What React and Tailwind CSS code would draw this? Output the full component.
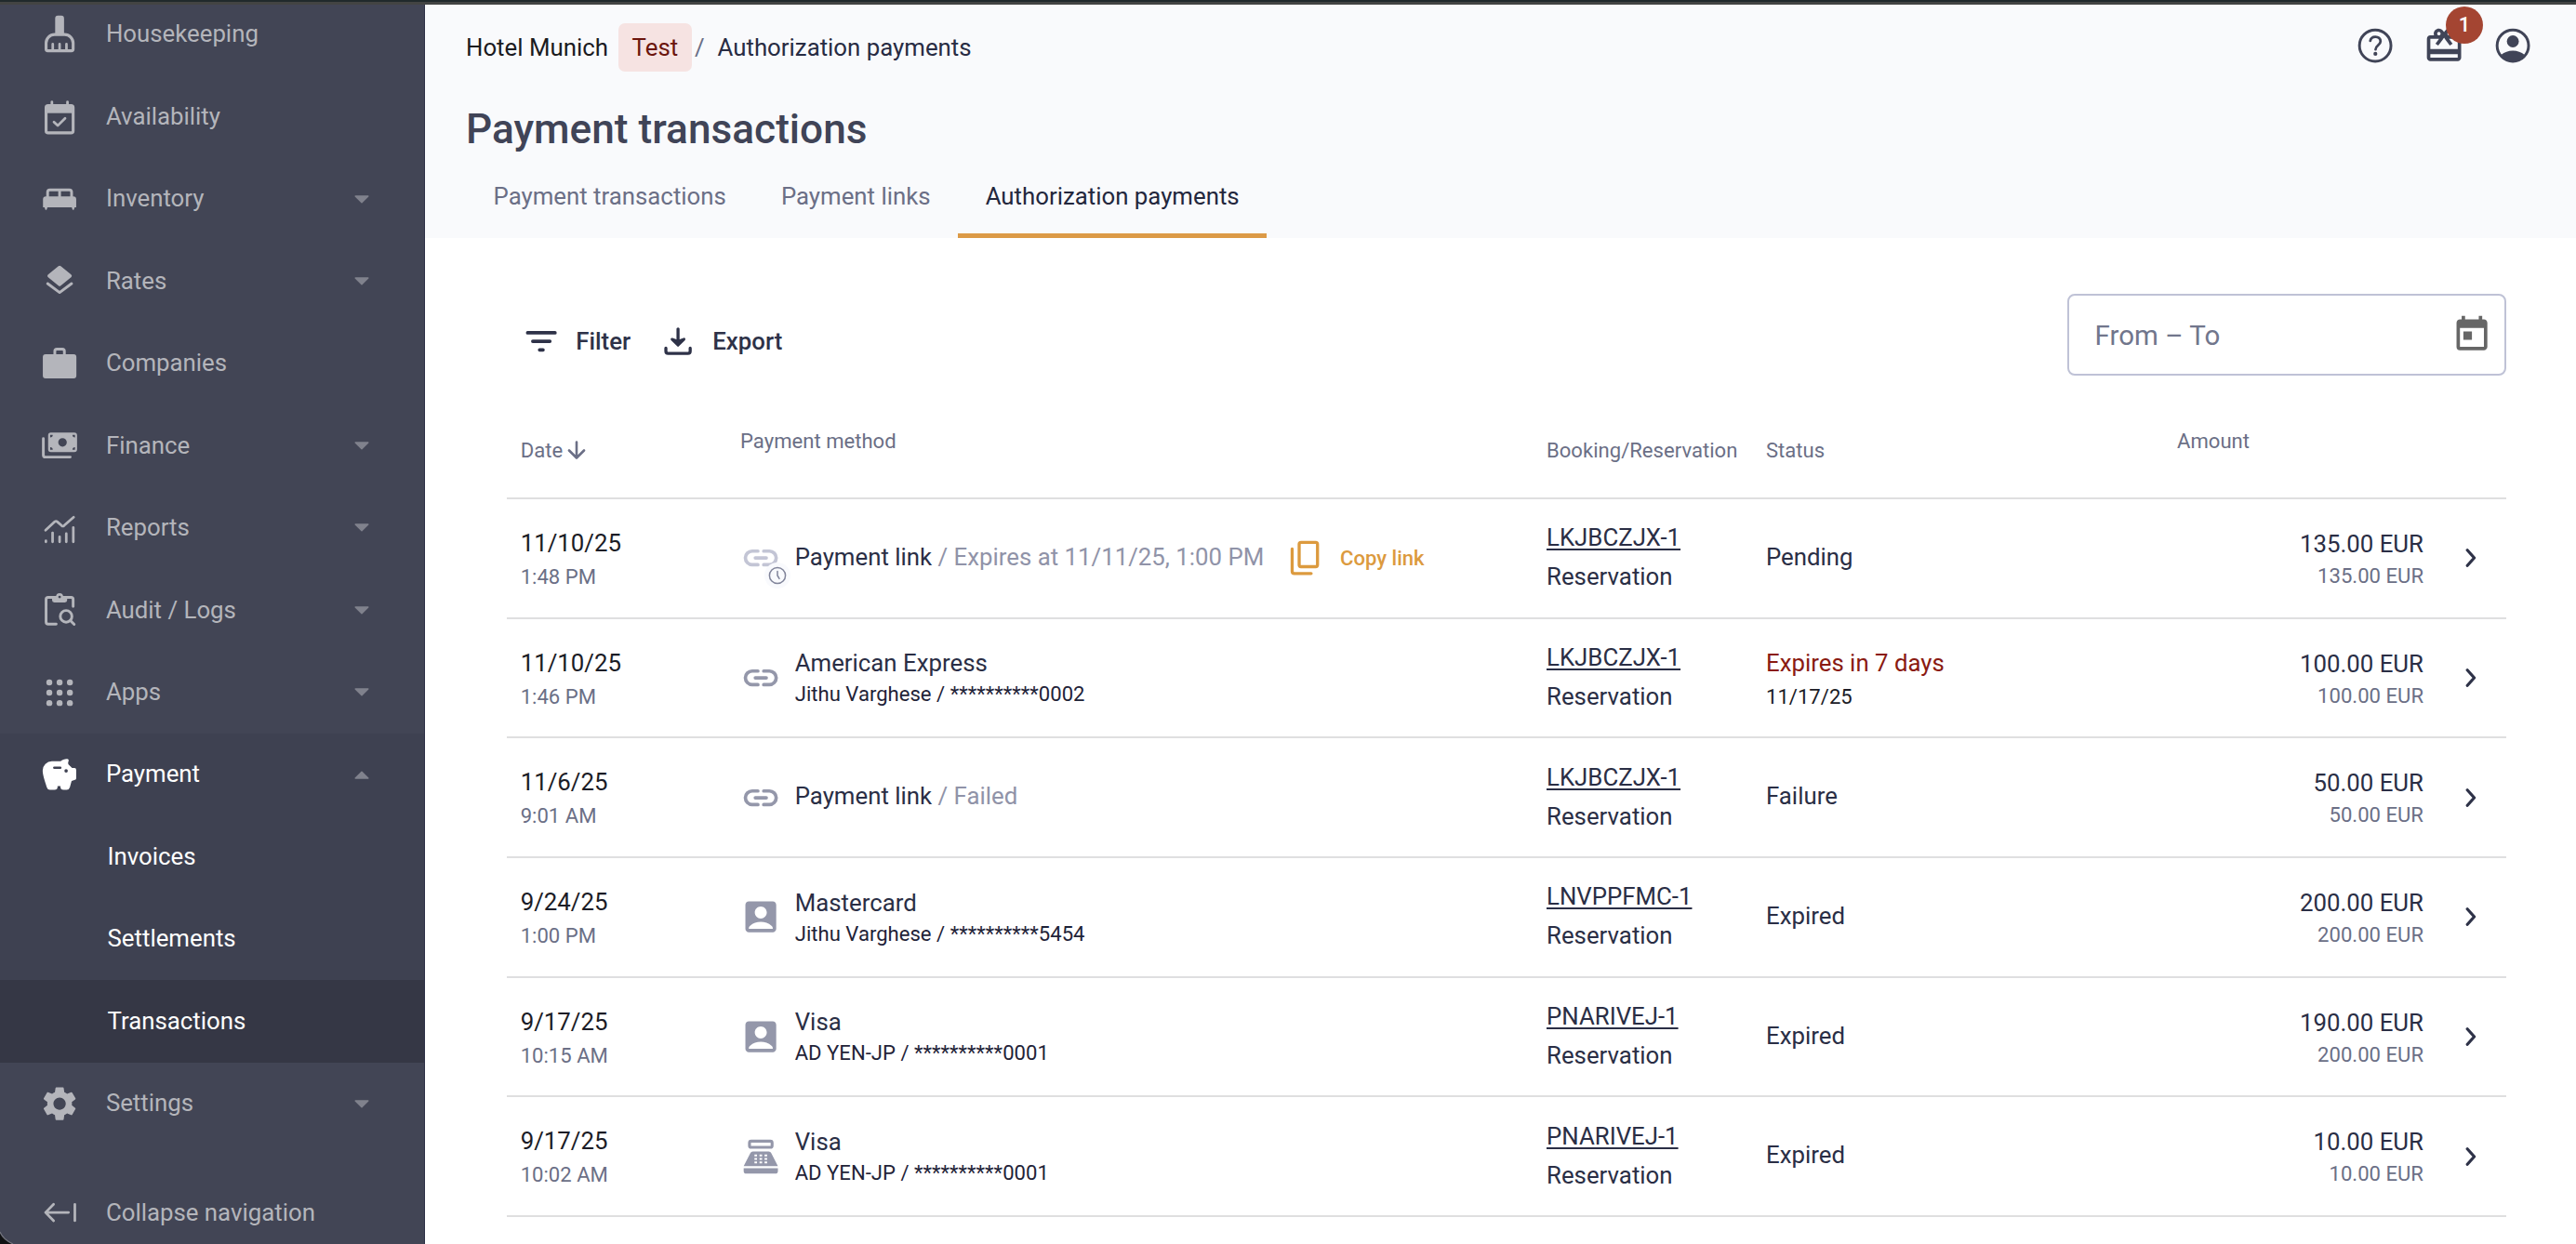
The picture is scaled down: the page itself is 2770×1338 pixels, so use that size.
import React from 'react';
import { MdSettings, MdOutlineRedeem, MdToday, MdAccountBox } from 'react-icons/md';

const Icon = ({ children, className = "" }) => (
  <svg viewBox="0 0 24 24" className={`size-[44.2px] shrink-0 ${className}`} fill="none" stroke="currentColor" strokeLinecap="round" strokeLinejoin="round">
    {children}
  </svg>
);

const BroomIcon = () => (
  <Icon>
    <path d="M9.4 12V2.6A1.6 1.6 0 0 1 11 1h2a1.6 1.6 0 0 1 1.6 1.6V12z" fill="currentColor" stroke="none" />
    <path d="M4.1 20.5V17A5 5 0 0 1 9.1 12h5.8a5 5 0 0 1 5 5v3.5a1 1 0 0 1-1 1H5.1a1 1 0 0 1-1-1z" strokeWidth="1.7" />
    <path d="M8 17.6V21M12 17.6V21M16 17.6V21" strokeWidth="1.5" />
  </Icon>
);

const CalendarCheckIcon = () => (
  <Icon>
    <rect x="4.1" y="5.2" width="15.8" height="15.9" rx="1.2" strokeWidth="1.7" />
    <path d="M4 5.2h16V9.6H4z" fill="currentColor" stroke="none" />
    <path d="M7.5 3v2.4M16.6 3v2.4" strokeWidth="1.5" />
    <path d="M8.7 14.8l2.2 2.1 4.3-4.3" strokeWidth="1.5" />
  </Icon>
);

const BedIcon = () => (
  <Icon>
    <path d="M5 11V8a1.3 1.3 0 0 1 1.3-1.3h11.4A1.3 1.3 0 0 1 19 8v3M12 6.7V11" strokeWidth="1.6" />
    <path d="M4 10.4h16a1.7 1.7 0 0 1 1.7 1.7v4.7h-.9l-.4 1.3a.5.5 0 0 1-.9 0l-.4-1.3H4.9l-.4 1.3a.5.5 0 0 1-.9 0l-.4-1.3h-.9v-4.7A1.7 1.7 0 0 1 4 10.4z" fill="currentColor" stroke="none" />
  </Icon>
);

const LayersIcon = () => (
  <Icon>
    <path d="M12 4.2l6 4.9-6 4.8-6-4.8z" fill="currentColor" strokeWidth="2.2" />
    <path d="M5 13.6l7 5.2 7-5.2" strokeWidth="1.6" />
  </Icon>
);

const BriefcaseIcon = () => (
  <Icon>
    <rect x="2.2" y="6.5" width="19.6" height="14.1" rx="1.6" fill="currentColor" stroke="none" />
    <path d="M9.2 7V4.7a1.2 1.2 0 0 1 1.2-1.2h3.2a1.2 1.2 0 0 1 1.2 1.2V7" strokeWidth="1.6" />
  </Icon>
);

const CashIcon = () => (
  <Icon>
    <path d="M2.5 8v9.6a1.2 1.2 0 0 0 1.2 1.2H18.2" strokeWidth="1.6" />
    <path
      fill="currentColor" stroke="none" fillRule="evenodd"
      d="M6.9 4.5h13.7a1.6 1.6 0 0 1 1.6 1.6v8.2a1.6 1.6 0 0 1-1.6 1.6H6.9a1.6 1.6 0 0 1-1.6-1.6V6.1a1.6 1.6 0 0 1 1.6-1.6zM13.7 7.7a2.5 2.5 0 1 0 0 5 2.5 2.5 0 0 0 0-5zM6.5 5.9v1.5A1.5 1.5 0 0 0 8 5.9zM21 5.9h-1.500a1.500 1.500 0 0 0 1.500 1.500zM6.500 14.500H8A1.500 1.500 0 0 0 6.500 13zM21 14.500V13a1.500 1.500 0 0 0-1.500 1.500z"
    />
  </Icon>
);

const ReportsIcon = () => (
  <Icon>
    <path d="M3.8 13.2l5.4-5a1.1 1.1 0 0 1 1.4 0l2.6 2.3a1.1 1.1 0 0 0 1.4 0l5.6-4.9" strokeWidth="1.5" />
    <path d="M4 19.4V20M7.9 14.7V20M12 17v3M15.9 15.2V20M20 11.6V20" strokeWidth="1.5" />
  </Icon>
);

const AuditIcon = () => (
  <Icon>
    <path d="M10 20.2H5.3a1.2 1.2 0 0 1-1.2-1.2V5.8a1.2 1.2 0 0 1 1.2-1.2h13.4a1.2 1.2 0 0 1 1.2 1.2v4.1" strokeWidth="1.6" />
    <path d="M7.6 4.3h2.3a2.1 2.1 0 0 1 4.2 0h2.3v2a1.3 1.3 0 0 1-1.3 1.3H8.9a1.3 1.3 0 0 1-1.3-1.3z" fill="currentColor" stroke="none" />
    <circle cx="12" cy="4.4" r="0.8" fill="#424555" stroke="none" />
    <circle cx="15.8" cy="15.7" r="3.4" strokeWidth="1.6" />
    <path d="M18.3 18.2l2.2 2.2" strokeWidth="1.6" />
  </Icon>
);

const AppsIcon = () => (
  <Icon>
    {[6, 12, 18].map((y) => [6, 12, 18].map((x) => (
      <circle key={`${x}-${y}`} cx={x} cy={y} r="1.75" fill="currentColor" stroke="none" />
    )))}
  </Icon>
);

const PiggyIcon = () => (
  <Icon>
    <path
      fill="currentColor" stroke="none"
      d="M7.5 4.2h5.1c.9-.8 2.3-1.4 3.7-1.4.9 0 1.2.7.9 1.4-.3.8-.3 1.3 0 1.9l2.1 2.1h1.4a1 1 0 0 1 1 1v4.9a1 1 0 0 1-.7 1l-2 .7-1 3.6a2 2 0 0 1-1.9 1.5h-1.8a1.8 1.8 0 0 1-1.8-1.8v-.4h-1.7v.4A1.8 1.8 0 0 1 9 20.9H6.4a2 2 0 0 1-1.9-1.5C3.2 15 2.1 12 2.1 9.6a5.4 5.4 0 0 1 5.4-5.4z"
    />
    <path d="M8.9 8h3.5" stroke="#3e4151" strokeWidth="1.4" />
    <circle cx="15.8" cy="9.8" r="1" fill="#3e4151" stroke="none" />
  </Icon>
);

const CollapseIcon = () => (
  <Icon>
    <path d="M8.5 7.2L3.8 12l4.7 4.8M3.8 12h13.4M20.9 7.2v9.6" strokeWidth="1.5" />
  </Icon>
);

const HelpIcon = () => (
  <Icon>
    <circle cx="12" cy="12" r="9.2" strokeWidth="1.6" />
    <path d="M9.1 9.2c.3-1.5 1.5-2.4 3-2.4 1.7 0 3 1.1 3 2.7 0 2.2-2.9 2.5-2.9 4.7" strokeWidth="1.5" />
    <circle cx="12.1" cy="16.8" r="1.15" fill="currentColor" stroke="none" />
  </Icon>
);

const AccountIcon = () => (
  <Icon>
    <circle cx="12" cy="12" r="9.2" strokeWidth="1.6" />
    <circle cx="12" cy="9.5" r="3.5" fill="currentColor" stroke="none" />
    <path d="M5.3 17.3C7 15.8 9.4 14.9 12 14.9s5 .9 6.7 2.4C17.3 20 14.8 21.3 12 21.3S6.7 20 5.3 17.3z" fill="currentColor" stroke="none" />
  </Icon>
);

const FilterIcon = () => (
  <Icon>
    <path d="M4 7h16M7 12h10M11 17h2" strokeWidth="2" />
  </Icon>
);

const DownloadIcon = () => (
  <Icon>
    <path d="M12 4.8V11" strokeWidth="1.8" />
    <path d="M8.5 10.8l2.7 1h1.6l2.7-1L12 14.3z" fill="currentColor" strokeWidth="1.6" />
    <path d="M4.9 16v1.8a1.3 1.3 0 0 0 1.3 1.3h11.6a1.3 1.3 0 0 0 1.3-1.3V16" strokeWidth="1.8" />
  </Icon>
);

const LinkIcon = () => (
  <Icon>
    <path d="M10.3 8H7a4 4 0 0 0 0 8h3.3M13.7 8H17a4 4 0 0 1 0 8h-3.3M8.8 12h6.4" strokeWidth="2" />
  </Icon>
);

const CopyIcon = () => (
  <Icon>
    <rect x="8.7" y="2.9" width="10.7" height="14.2" rx="1.1" strokeWidth="1.8" />
    <path d="M4.6 6.8v13a1.3 1.3 0 0 0 1.3 1.3h9.8" strokeWidth="1.8" />
  </Icon>
);

const TerminalIcon = () => (
  <Icon>
    <rect x="5.4" y="2.9" width="13.2" height="3.6" rx="1" strokeWidth="1.7" />
    <path d="M7.4 8.9h9.2a1.6 1.6 0 0 1 1.5 1L22 17.5H2L5.9 9.9a1.6 1.6 0 0 1 1.5-1zM2 18.7h20v1.6a1.6 1.6 0 0 1-1.6 1.6H3.6A1.6 1.6 0 0 1 2 20.3z" fill="currentColor" stroke="none" />
    <path d="M8.3 11.3h1.5M11.25 11.3h1.5M14.2 11.3h1.5M8.3 13.3h1.5M11.25 13.3h1.5M14.2 13.3h1.5M8.3 15.3h1.5M11.25 15.3h1.5M14.2 15.3h1.5" stroke="white" strokeWidth="1.1" strokeLinecap="butt" />
  </Icon>
);

const GuestIcon = () => <MdAccountBox className="size-[44.2px] shrink-0" />;

const PendingLinkIcon = () => (
  <span className="relative flex text-[#c3c5d5]">
    <LinkIcon />
    <span className="absolute left-[26px] top-[27px] size-7 rounded-full bg-[#f9fafd] flex items-center justify-center">
      <svg viewBox="0 0 20 20" className="size-5 text-[#80849a]" fill="none" stroke="currentColor" strokeWidth="1.5" strokeLinecap="round">
        <circle cx="10" cy="10" r="8.6" />
        <path d="M10 5.5V10l2 3.4" />
      </svg>
    </span>
  </span>
);

const methodIcons = {
  pending: PendingLinkIcon,
  link: LinkIcon,
  guest: GuestIcon,
  terminal: TerminalIcon,
};

const navItems = [
  { label: 'Housekeeping', icon: BroomIcon },
  { label: 'Availability', icon: CalendarCheckIcon },
  { label: 'Inventory', icon: BedIcon, menu: true },
  { label: 'Rates', icon: LayersIcon, menu: true },
  { label: 'Companies', icon: BriefcaseIcon },
  { label: 'Finance', icon: CashIcon, menu: true },
  { label: 'Reports', icon: ReportsIcon, menu: true },
  { label: 'Audit / Logs', icon: AuditIcon, menu: true },
  { label: 'Apps', icon: AppsIcon, menu: true },
];

const transactions = [
  { date: '11/10/25', time: '1:48 PM', icon: 'pending', method: 'Payment link', note: 'Expires at 11/11/25, 1:00 PM', copy: true, booking: 'LKJBCZJX-1', status: 'Pending', amount: '135.00 EUR', total: '135.00 EUR' },
  { date: '11/10/25', time: '1:46 PM', icon: 'link', method: 'American Express', card: 'Jithu Varghese / **********0002', booking: 'LKJBCZJX-1', status: 'Expires in 7 days', due: '11/17/25', amount: '100.00 EUR', total: '100.00 EUR' },
  { date: '11/6/25', time: '9:01 AM', icon: 'link', method: 'Payment link', note: 'Failed', booking: 'LKJBCZJX-1', status: 'Failure', amount: '50.00 EUR', total: '50.00 EUR' },
  { date: '9/24/25', time: '1:00 PM', icon: 'guest', method: 'Mastercard', card: 'Jithu Varghese / **********5454', booking: 'LNVPPFMC-1', status: 'Expired', amount: '200.00 EUR', total: '200.00 EUR' },
  { date: '9/17/25', time: '10:15 AM', icon: 'guest', method: 'Visa', card: 'AD YEN-JP / **********0001', booking: 'PNARIVEJ-1', status: 'Expired', amount: '190.00 EUR', total: '200.00 EUR' },
  { date: '9/17/25', time: '10:02 AM', icon: 'terminal', method: 'Visa', card: 'AD YEN-JP / **********0001', booking: 'PNARIVEJ-1', status: 'Expired', amount: '10.00 EUR', total: '10.00 EUR' },
];

const Caret = ({ up }) => (
  <svg viewBox="0 0 16 9" className={`w-4 h-[9px] ml-auto mr-[59px] text-[#80828d] ${up ? 'rotate-180' : ''}`} fill="currentColor" stroke="currentColor" strokeWidth="1.5" strokeLinejoin="round">
    <path d="M1.2 1h13.6L8 7.8z" />
  </svg>
);

const NavItem = ({ label, icon: NavIcon, menu, open }) => (
  <div className={`flex h-[88.46px] items-center pl-[42.2px] ${open ? 'text-white' : 'text-[#b4b5bb]'}`}>
    <NavIcon />
    <span className="ml-[27.5px] pb-px">{label}</span>
    {menu && <Caret up={open} />}
  </div>
);

const SubItem = ({ label, active }) => (
  <div className={`flex h-[88.46px] items-center pb-px pl-[115.5px] text-white ${active ? 'bg-[#353745]' : ''}`}>{label}</div>
);

const Sidebar = () => (
  <aside className="w-[457px] shrink-0 overflow-hidden border-r border-[#2d3046] bg-[#424555]">
    <nav className="-mt-3">
      {navItems.map((item) => <NavItem key={item.label} {...item} />)}
      <div className="bg-[#3e4151]">
        <NavItem label="Payment" icon={PiggyIcon} menu open />
        <SubItem label="Invoices" />
        <SubItem label="Settlements" />
        <SubItem label="Transactions" active />
      </div>
      <NavItem label="Settings" icon={() => <MdSettings className="size-[44.2px] shrink-0" />} menu />
      <div className="mt-[29px]">
        <NavItem label="Collapse navigation" icon={CollapseIcon} />
      </div>
    </nav>
  </aside>
);

const Header = () => (
  <header className="flex h-[251px] flex-col bg-[#f9fafc] pl-11">
    <div className="mt-[20px] flex h-[52px] items-center pr-[46px]">
      <span className="text-[#1b1b1f]">Hotel Munich</span>
      <span className="ml-[11px] flex h-[52px] w-[79px] items-center justify-center rounded-[7px] bg-[#f6e3e2] text-[#6b150d]">Test</span>
      <span className="ml-[3px] text-[#6b6f86]">/</span>
      <span className="ml-[14px] text-[#282c43]">Authorization payments</span>
      <div className="ml-auto flex gap-[29.5px] pb-1 text-[#404457]">
        <HelpIcon />
        <span className="relative">
          <MdOutlineRedeem className="size-[44.2px]" />
          <span className="absolute -top-5 left-6 flex size-10 items-center justify-center rounded-full bg-[#a44532] text-[22px] font-medium text-white">1</span>
        </span>
        <AccountIcon />
      </div>
    </div>
    <h1 className="mt-[35.5px] text-[44.2px] leading-[52px] font-medium text-[#404457]">Payment transactions</h1>
    <div className="mt-auto flex text-[#6b6f86]">
      <div className="h-[89px] px-[29.5px] pt-[26px] leading-9">Payment transactions</div>
      <div className="h-[89px] px-[29.5px] pt-[26px] leading-9">Payment links</div>
      <div className="h-[89px] border-b-[5px] border-[#dc9a46] px-[29.5px] pt-[26px] leading-9 text-[#23273d]">Authorization payments</div>
    </div>
  </header>
);

const Toolbar = () => (
  <div className="flex h-[88px] items-start text-[#2e3248]">
    <div className="ml-[15px] mt-[29px] flex items-center font-medium">
      <FilterIcon />
      <span className="ml-[15px]">Filter</span>
      <span className="ml-[29px] flex"><DownloadIcon /></span>
      <span className="ml-[15px]">Export</span>
    </div>
    <div className="ml-auto flex h-[88px] w-[472px] items-center justify-between rounded-[8px] border-2 border-[#bfc2d6] pl-[27.5px] pr-[12.5px]">
      <span className="pt-[3px] text-[29.5px] text-[#71768c]">From – To</span>
      <MdToday className="size-[44.2px] text-[#666]" />
    </div>
  </div>
);

const columns = "grid grid-cols-[236px_867px_236px_441px_295px_1fr]";

const TableHead = () => (
  <div className={`${columns} h-[133px] border-b-2 border-[#dfdfe0] text-[22.1px] leading-[26px] text-[#6b6f86]`}>
    <div className="flex items-start pl-[14.7px] pt-[66.5px]">
      Date
      <svg viewBox="0 0 20 20" className="ml-[5px] mt-[3px] size-5" fill="none" stroke="currentColor" strokeWidth="2.6" strokeLinecap="round" strokeLinejoin="round">
        <path d="M10 1.5v16.5M2 10.5l8 8 8-8" />
      </svg>
    </div>
    <div className="pl-[15px] pt-[56.5px]">Payment method</div>
    <div className="pl-[15px] pt-[66.5px]">Booking/Reservation</div>
    <div className="pl-[15px] pt-[66.5px]">Status</div>
    <div className="pl-[16px] pt-[56.5px]">Amount</div>
  </div>
);

const TransactionRow = ({ row }) => {
  const MethodIcon = methodIcons[row.icon];
  return (
    <div className={`${columns} h-[128.7px] border-b-2 border-[#dfdfe0] text-[#2a2e45]`}>
      <div className="flex flex-col justify-center pl-[14.7px] pt-[3px]">
        <span className="leading-[37px] text-[#1b1c26]">{row.date}</span>
        <span className="text-[22.1px] leading-[35px] text-[#6b6f86]">{row.time}</span>
      </div>
      <div className="flex items-center pl-[15px]">
        <span className="flex text-[#9497aa]"><MethodIcon /></span>
        {row.card ? (
          <div className="ml-[14.5px] flex flex-col pt-[2px]">
            <span className="leading-[34px]">{row.method}</span>
            <span className="text-[22.1px] leading-[33.5px] text-[#1f2338]">{row.card}</span>
          </div>
        ) : (
          <span className="ml-[14.5px] -mt-0.5">
            {row.method} <span className="text-[#9093a8]">/ {row.note}</span>
          </span>
        )}
        {row.copy && (
          <span className="ml-[22px] flex items-center text-[22.1px] font-medium text-[#dc9a3e]">
            <CopyIcon />
            <span className="ml-[15.5px]">Copy link</span>
          </span>
        )}
      </div>
      <div className="flex flex-col justify-center pb-[2px] pl-[15px] leading-[42px]">
        <span className="underline decoration-2 underline-offset-[3px]">{row.booking}</span>
        <span>Reservation</span>
      </div>
      {row.due ? (
        <div className="flex flex-col justify-center pl-[15px] pt-[3px]">
          <span className="leading-[37px] text-[#8a1a12]">{row.status}</span>
          <span className="text-[22.1px] leading-[35px] text-[#1b1c26]">{row.due}</span>
        </div>
      ) : (
        <div className="flex items-center pb-[2px] pl-[15px]">{row.status}</div>
      )}
      <div className="flex flex-col items-end justify-center pr-[14px] pt-[3px]">
        <span className="leading-[34px]">{row.amount}</span>
        <span className="text-[22.1px] leading-[34px] text-[#6b6f86]">{row.total}</span>
      </div>
      <div className="flex items-center pl-[31px]">
        <svg viewBox="0 0 12 22" className="h-[22px] w-3 text-[#2e3248]" fill="none" stroke="currentColor" strokeWidth="3.2" strokeLinecap="round" strokeLinejoin="round">
          <path d="M2.2 2.7L9.6 11l-7.4 8.300" />
        </svg>
      </div>
    </div>
  );
};

export default function App() {
  return (
    <div className="relative flex h-[1338px] w-[2770px] flex-col overflow-hidden bg-white font-['Roboto',sans-serif] text-[25.8px] leading-normal">
      {/* Edge of the browser toolbar */}
      <div className="h-[5px] shrink-0 border-b-[3px] border-[#434443] bg-[#20292b]" />
      <div className="flex min-h-0 flex-1">
        <Sidebar />
        <main className="min-w-0 flex-1">
          <Header />
          <section className="pl-[88px] pr-[75px] pt-[60px]">
            <Toolbar />
            <TableHead />
            {transactions.map((row, i) => <TransactionRow key={i} row={row} />)}
          </section>
        </main>
      </div>
      {/* Rounded window corner */}
      <svg viewBox="0 0 15 14" className="absolute bottom-0 left-0 h-[14px] w-[15px]">
        <path d="M0 1Q3 9 14 14H0z" fill="#111214" />
        <path d="M0 1Q3 9 14 14" fill="none" stroke="#73757f" strokeWidth="1.2" />
      </svg>
    </div>
  );
}
